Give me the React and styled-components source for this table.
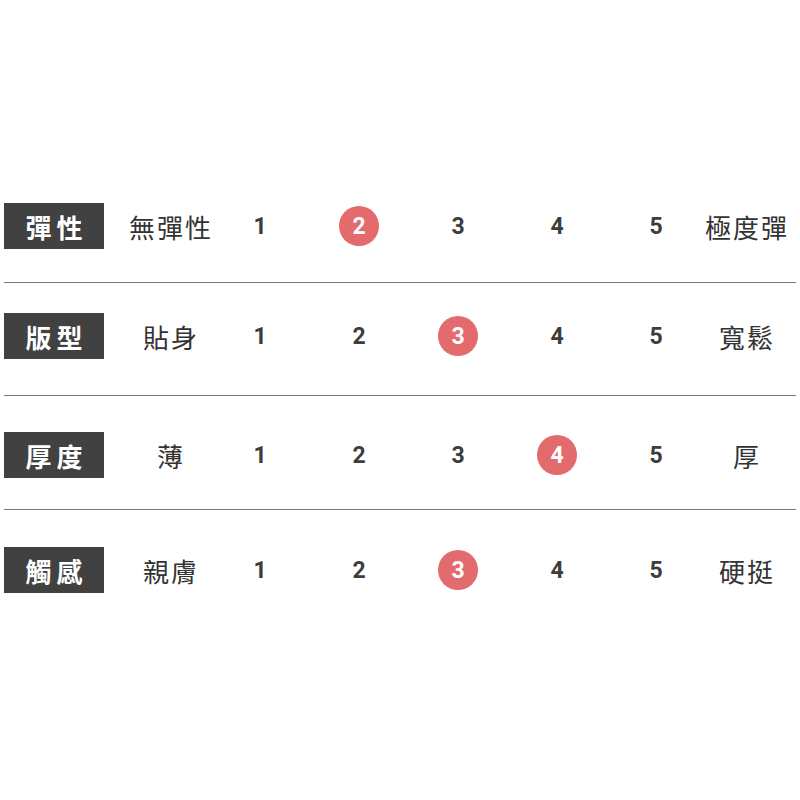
import React from "react";
import styled, { createGlobalStyle } from "styled-components";

const Global = createGlobalStyle`
  html, body { margin: 0; padding: 0; background: #fff; }
  body { font-family: "Noto Sans CJK TC", "Noto Sans", sans-serif; }
`;

const Page = styled.div`
  width: 800px;
  padding: 169px 0 0 4px;
  box-sizing: border-box;
`;

const Row = styled.div`
  display: flex;
  align-items: center;
  padding: ${(p) => p.$pad};
  width: 792px;
  border-bottom: ${(p) => (p.$last ? "none" : "1.5px solid #7a7a7a")};
`;

const Tag = styled.div`
  width: 100px;
  height: 46px;
  background: #414141;
  color: #fff;
  display: flex;
  align-items: center;
  justify-content: center;
  font-family: "Noto Sans CJK TC", sans-serif;
  font-weight: 700;
  font-size: 26px;
  letter-spacing: 5px;
  text-indent: 5px;
  margin-right: 16px;
`;

const End = styled.div`
  width: 100px;
  text-align: center;
  font-family: "Noto Sans CJK TC", sans-serif;
  font-size: 26px;
  letter-spacing: 2px;
  text-indent: 2px;
  color: #333;
  margin-left: ${(p) => (p.$right ? "20px" : "0")};
  margin-right: ${(p) => (p.$right ? "0" : "20px")};
`;

const Scale = styled.div`
  display: flex;
  gap: 59px;
`;

const Num = styled.div`
  width: 40px;
  height: 40px;
  border-radius: 50%;
  display: flex;
  align-items: center;
  justify-content: center;
  font-family: Roboto, "Liberation Sans", sans-serif;
  font-weight: 700;
  font-size: 23px;
  color: ${(p) => (p.$on ? "#fff" : "#3d3d3d")};
  background: ${(p) => (p.$on ? "#e36a6d" : "transparent")};
`;

const rows = [
  { tag: "彈性", low: "無彈性", high: "極度彈", v: 2, pad: "34px 0 33px" },
  { tag: "版型", low: "貼身", high: "寬鬆", v: 3, pad: "30px 0 36px" },
  { tag: "厚度", low: "薄", high: "厚", v: 4, pad: "36px 0 31px" },
  { tag: "觸感", low: "親膚", high: "硬挺", v: 3, pad: "37px 0 34px" },
];

export default function App() {
  return (
    <>
      <Global />
      <Page>
        {rows.map((r, i) => (
          <Row key={r.tag} $pad={r.pad} $last={i === rows.length - 1}>
            <Tag>{r.tag}</Tag>
            <End>{r.low}</End>
            <Scale>
              {[1, 2, 3, 4, 5].map((n) => (
                <Num key={n} $on={n === r.v}>
                  {n}
                </Num>
              ))}
            </Scale>
            <End $right>{r.high}</End>
          </Row>
        ))}
      </Page>
    </>
  );
}
